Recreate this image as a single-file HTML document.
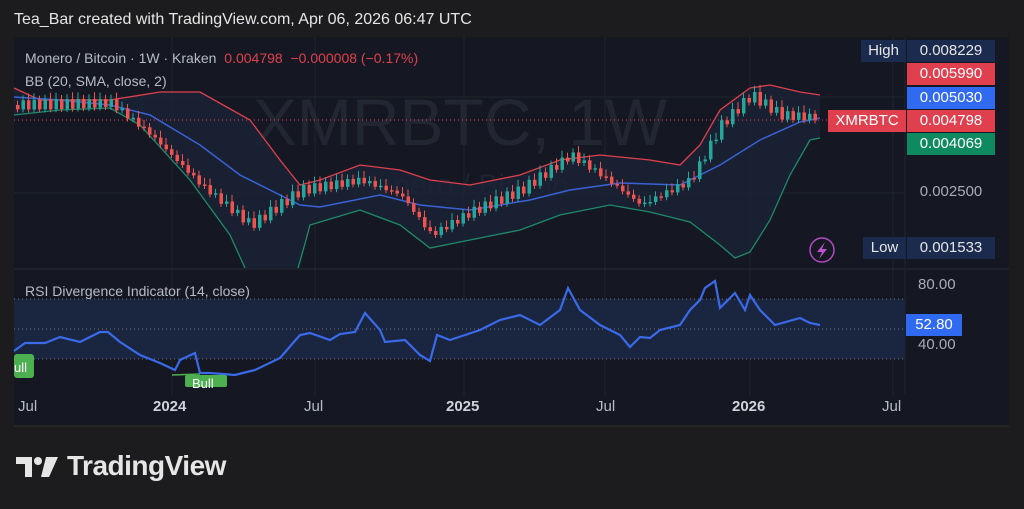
<!DOCTYPE html><html><head><meta charset="utf-8"><style>
body{margin:0;width:1024px;height:509px;background:#1c1c1e;overflow:hidden;font-family:"Liberation Sans",sans-serif}
.t{position:absolute;white-space:nowrap}
</style></head><body>
<div class="t" style="left:14px;top:11px;font-size:16px;color:#e6e6e6">Tea_Bar created with TradingView.com, Apr 06, 2026 06:47 UTC</div>
<svg id="s" width="1024" height="509" style="position:absolute;left:0;top:0">
<rect x="14" y="37" width="995" height="388" fill="#151822"/>
<g stroke="#1f2330" stroke-width="1">
<line x1="14" y1="97" x2="905" y2="97"/><line x1="14" y1="193" x2="905" y2="193"/>
<line x1="172" y1="37" x2="172" y2="395"/><line x1="315" y1="37" x2="315" y2="395"/><line x1="464" y1="37" x2="464" y2="395"/><line x1="605" y1="37" x2="605" y2="395"/><line x1="750" y1="37" x2="750" y2="395"/><line x1="893" y1="37" x2="893" y2="395"/>
</g>
<line x1="14" y1="269" x2="1009" y2="269" stroke="#262a35"/>
<line x1="905" y1="37" x2="905" y2="395" stroke="#1f2330"/>
<text x="460" y="145" font-size="66" fill="#222632" text-anchor="middle" font-family="Liberation Sans">XMRBTC, 1W</text>
<text x="460" y="195" font-size="30" fill="#1f2330" text-anchor="middle" font-family="Liberation Sans">Monero / Bitcoin</text>
<path d="M14 88 L40 100 L110 100 L160 92 L200 92 L250 120 L280 160 L300 185 L320 180 L360 165 L400 170 L430 180 L470 185 L520 175 L560 160 L600 155 L650 160 L680 165 L700 145 L720 110 L750 88 L770 85 L800 92 L820 95 L820 138 L810 140 L790 175 L770 220 L750 252 L735 258 L720 245 L690 222 L650 212 L610 205 L560 215 L520 230 L470 240 L430 248 L400 225 L360 210 L310 225 L300 268 L245 268 L230 235 L190 180 L140 125 L110 108 L60 110 L14 115Z" fill="#1a2336" opacity="0.8"/>
<polyline fill="none" stroke="#e0404e" stroke-width="1.3" points="14,88 40,100 110,100 160,92 200,92 250,120 280,160 300,185 320,180 360,165 400,170 430,180 470,185 520,175 560,160 600,155 650,160 680,165 700,145 720,110 750,88 770,85 800,92 820,95"/>
<polyline fill="none" stroke="#3a62d6" stroke-width="1.5" points="14,97 60,100 110,105 150,115 200,145 240,175 280,195 300,205 320,207 380,195 420,205 470,210 530,200 570,190 620,183 680,185 720,165 760,140 800,122 820,118"/>
<polyline fill="none" stroke="#1f8a6a" stroke-width="1.3" points="14,115 60,110 110,108 140,125 190,180 230,235 245,268"/>
<polyline fill="none" stroke="#1f8a6a" stroke-width="1.3" points="298,268 306,240 310,225 360,210 400,225 430,248 470,240 520,230 560,215 610,205 650,212 690,222 720,245 735,258 750,252 770,220 790,175 810,140 820,138"/>
<line x1="14" y1="120" x2="905" y2="120" stroke="#e0404e" stroke-width="1" stroke-dasharray="1,3"/>
<g id="c"></g>
<rect x="14" y="299" width="891" height="60" fill="#1a2540"/>
<g stroke="#6a6e7a" stroke-dasharray="1,3"><line x1="14" y1="299" x2="905" y2="299"/><line x1="14" y1="329" x2="905" y2="329"/><line x1="14" y1="359" x2="905" y2="359"/></g>
<polyline fill="none" stroke="#3a6ae8" stroke-width="2.2" points="14,351 25,343 45,343 60,337 80,342 100,332 108,332 120,342 140,355 160,363 175,370 180,360 195,353 200,373 210,373 235,375 255,370 280,358 300,335 310,333 330,340 340,334 355,332 365,313 380,330 385,342 405,340 420,355 430,361 437,335 450,340 465,335 480,330 500,320 520,315 540,325 560,310 568,288 580,310 600,325 620,335 630,347 640,337 650,338 660,330 680,325 690,310 700,300 705,288 715,281 720,308 735,293 745,310 750,295 760,310 775,325 800,318 810,323 820,325"/>
<rect x="14" y="354" width="20" height="24" rx="3" fill="#4caf50"/><text x="14" y="372" font-size="13" fill="#fff">ull</text>
<rect x="185" y="375" width="42" height="12" rx="2" fill="#4caf50"/><text x="192" y="388" font-size="13" fill="#fff">Bull</text>
<line x1="172" y1="375" x2="200" y2="374" stroke="#4caf50" stroke-width="1.5"/>
<circle cx="822" cy="250" r="12" fill="none" stroke="#b04ac0" stroke-width="1.5"/>
<path d="M825 242 L817 252 L822 252 L819 259 L827 249 L822 249Z" fill="#c050d0"/>
<rect x="14" y="425" width="995" height="2" fill="#262626"/>
</svg>
<div class="t" style="left:25px;top:50px;font-size:14px;color:#b8bcc6">Monero / Bitcoin · 1W · Kraken <span style="color:#e0404e;margin-left:4px">0.004798 &nbsp;−0.000008 (−0.17%)</span></div>
<div class="t" style="left:25px;top:73px;font-size:14px;color:#b8bcc6">BB (20, SMA, close, 2)</div>
<div class="t" style="left:25px;top:283px;font-size:14px;color:#b8bcc6">RSI Divergence Indicator (14, close)</div>
<div class="t" style="left:861px;top:40px;width:45px;height:22px;background:#1b2b4d;color:#e6e6e6;font-size:15px;line-height:22px;text-align:center">High</div>
<div class="t" style="left:907px;top:40px;width:88px;height:22px;background:#1b2b4d;color:#e6e6e6;font-size:15px;line-height:22px;text-align:center">0.008229</div>
<div class="t" style="left:907px;top:63px;width:88px;height:22px;background:#e0404e;color:#fff;font-size:15px;line-height:22px;text-align:center">0.005990</div>
<div class="t" style="left:907px;top:87px;width:88px;height:22px;background:#2f6af0;color:#fff;font-size:15px;line-height:22px;text-align:center">0.005030</div>
<div class="t" style="left:828px;top:110px;width:78px;height:22px;background:#e0404e;color:#fff;font-size:15px;line-height:22px;text-align:center">XMRBTC</div>
<div class="t" style="left:907px;top:110px;width:88px;height:22px;background:#e0404e;color:#fff;font-size:15px;line-height:22px;text-align:center">0.004798</div>
<div class="t" style="left:907px;top:133px;width:88px;height:22px;background:#0f8a60;color:#fff;font-size:15px;line-height:22px;text-align:center">0.004069</div>
<div class="t" style="left:907px;top:183px;width:88px;font-size:15px;color:#a8acb6;text-align:center">0.002500</div>
<div class="t" style="left:863px;top:237px;width:43px;height:22px;background:#1b2b4d;color:#e6e6e6;font-size:15px;line-height:22px;text-align:center">Low</div>
<div class="t" style="left:907px;top:237px;width:88px;height:22px;background:#1b2b4d;color:#e6e6e6;font-size:15px;line-height:22px;text-align:center">0.001533</div>
<div class="t" style="left:918px;top:276px;font-size:15px;color:#a8acb6">80.00</div>
<div class="t" style="left:906px;top:314px;width:56px;height:22px;background:#2f6af0;color:#fff;font-size:15px;line-height:22px;text-align:center">52.80</div>
<div class="t" style="left:918px;top:336px;font-size:15px;color:#a8acb6">40.00</div>
<div class="t" style="left:18px;top:398px;font-size:15px;color:#b8bcc6">Jul</div>
<div class="t" style="left:153px;top:398px;font-size:15px;color:#d0d3da;font-weight:bold">2024</div>
<div class="t" style="left:304px;top:398px;font-size:15px;color:#b8bcc6">Jul</div>
<div class="t" style="left:446px;top:398px;font-size:15px;color:#d0d3da;font-weight:bold">2025</div>
<div class="t" style="left:596px;top:398px;font-size:15px;color:#b8bcc6">Jul</div>
<div class="t" style="left:732px;top:398px;font-size:15px;color:#d0d3da;font-weight:bold">2026</div>
<div class="t" style="left:882px;top:398px;font-size:15px;color:#b8bcc6">Jul</div>
<svg width="44" height="24" style="position:absolute;left:16px;top:455px"><path d="M0 2H16V22H9V9H0Z" fill="#e6e6e6"/><circle cx="22" cy="6" r="4" fill="#e6e6e6"/><path d="M30 2H42L33 22H25Z" fill="#e6e6e6"/></svg>
<div class="t" style="left:67px;top:450px;font-size:28px;font-weight:bold;color:#e6e6e6;letter-spacing:-0.5px">TradingView</div>
<script>
(function(){
var pts=[[14,105],[110,103],[150,135],[200,185],[250,225],[300,190],[360,180],[400,195],[430,235],[470,212],[520,190],[570,155],[600,175],[640,205],[690,180],[720,125],[750,95],[780,115],[820,118]];
function f(x){for(var i=0;i<pts.length-1;i++){var a=pts[i],b=pts[i+1];if(x>=a[0]&&x<=b[0])return a[1]+(b[1]-a[1])*(x-a[0])/(b[0]-a[0]);}return 118;}
var g=document.getElementById('c'),h='',prev=f(16);
for(var x=16;x<=818;x+=5.5){var c=f(x)+Math.sin(x*1.7)*5;var o=prev;var up=c<o;var ty=Math.min(o,c),bh=Math.max(Math.abs(o-c),1.5);
var col=up?'#26a69a':'#ef5350';h+='<line x1="'+(x+1.5)+'" x2="'+(x+1.5)+'" y1="'+(ty-3-Math.abs(Math.sin(x))*4)+'" y2="'+(ty+bh+3)+'" stroke="'+col+'" stroke-width="1"/><rect x="'+x+'" y="'+ty+'" width="3.5" height="'+bh+'" fill="'+col+'"/>';prev=c;}
g.innerHTML=h;
})();
</script>
</body></html>
